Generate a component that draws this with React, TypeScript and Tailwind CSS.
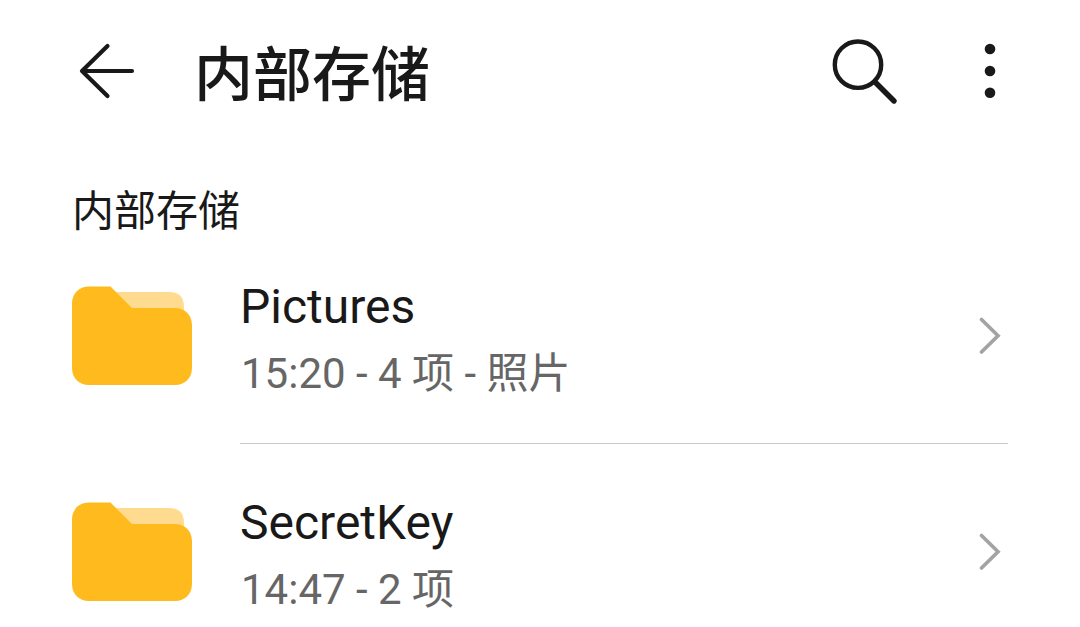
import React from 'react';

type Folder = { name: string; detail: string };

const folders: Folder[] = [
  { name: 'Pictures', detail: '15:20 - 4 项 - 照片' },
  { name: 'SecretKey', detail: '14:47 - 2 项' },
];

function FolderIcon() {
  return (
    <svg className="h-[100px] w-[120px] shrink-0" viewBox="0 0 120 100" aria-hidden="true">
      <path d="M40 6H97Q112 6 112 21V50H40Z" fill="#ffdb8f" />
      <path d="M17 0.5H38.5L60 22H103C113 22 120 29 120 39V82C120 92 113 99 103 99H17C7 99 0 92 0 82V17.5C0 7.5 7 0.5 17 0.5Z" fill="#ffbb1e" />
    </svg>
  );
}

export default function App() {
  return (
    <div className="min-h-screen bg-white font-['Roboto','Noto_Sans_CJK_SC',sans-serif] text-[#191919]">
      <header className="flex h-[144px] items-center px-[72px]">
        <button type="button" aria-label="返回" className="shrink-0">
          <svg className="h-[72px] w-[72px]" viewBox="72 36 72 72" fill="none" stroke="#191919" strokeWidth="4.2" strokeLinecap="round" strokeLinejoin="round">
            <path d="M132 71H82M107.500 46L82 71L107.500 96" />
          </svg>
        </button>
        <h1 className="ml-[50px] flex-1 pt-2 text-[59px] leading-[72px] font-medium">内部存储</h1>
        <button type="button" aria-label="搜索" className="shrink-0">
          <svg className="h-[72px] w-[72px]" viewBox="828 36 72 72" fill="none" stroke="#191919" strokeLinecap="round">
            <circle cx="858" cy="64.700" r="23.200" strokeWidth="4.4" />
            <path d="M875.500 82.500L894 101" strokeWidth="5.4" />
          </svg>
        </button>
        <button type="button" aria-label="更多" className="ml-[72px] shrink-0">
          <svg className="h-[72px] w-[36px]" viewBox="972 36 36 72" fill="#191919">
            <circle cx="990" cy="49" r="5.3" />
            <circle cx="990" cy="71" r="5.3" />
            <circle cx="990" cy="92.7" r="5.3" />
          </svg>
        </button>
      </header>
      <main className="px-[72px]">
        <h2 className="pt-[52px] text-[42px] leading-[32px]">内部存储</h2>
        <ul>
          {folders.map((folder) => (
            <li key={folder.name} className="group">
              <a href="#" className="flex items-start gap-[48px]">
                <span className="pt-[58px]">
                  <FolderIcon />
                </span>
                <span className="flex flex-1 items-start border-b border-[#c8c8c8] pt-[47px] pb-[34px] group-last:border-b-0 group-last:pb-0">
                  <span className="flex flex-1 flex-col">
                    <span className="text-[48px] leading-[64px]">{folder.name}</span>
                    <span className="pl-px text-[42px] leading-[70px] text-[#666666]">{folder.detail}</span>
                  </span>
                  <svg className="mt-[24px] h-[36px] w-[36px] shrink-0 overflow-visible" viewBox="972 299 36 36" fill="none" stroke="#a3a3a3" strokeWidth="3.7" strokeLinecap="round" aria-hidden="true">
                    <path d="M981.500 319.500L998 335.700L981.500 352" />
                  </svg>
                </span>
              </a>
            </li>
          ))}
        </ul>
      </main>
    </div>
  );
}
